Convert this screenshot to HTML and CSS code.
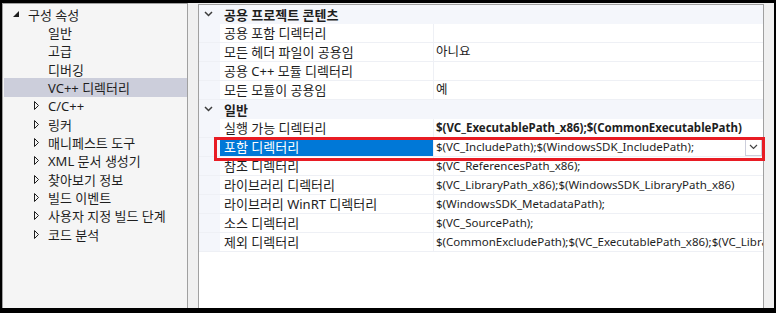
FILE: index.html
```html
<!DOCTYPE html>
<html lang="ko">
<head>
  <meta charset="UTF-8">
  <title>구성 속성 - VC++ 디렉터리</title>
  <link rel="stylesheet" href="styles.css">
</head>
<body>
  <div class="frame">
    <div class="tree">
      <div class="node root">
        <svg class="twisty" width="6" height="6" viewBox="0 0 6 6"><polygon points="6,0 6,6 0,6" fill="#1e1e1e"/></svg>
        <span>구성 속성</span>
      </div>
      <div class="node leaf">일반</div>
      <div class="node leaf">고급</div>
      <div class="node leaf">디버깅</div>
      <div class="node leaf selected">VC++ 디렉터리</div>
      <div class="node branch"><svg class="twisty" width="5" height="9" viewBox="0 0 5 9"><polygon points="0.5,0.5 4.5,4.5 0.5,8.5" fill="none" stroke="#1e1e1e"/></svg><span>C/C++</span></div>
      <div class="node branch"><svg class="twisty" width="5" height="9" viewBox="0 0 5 9"><polygon points="0.5,0.5 4.5,4.5 0.5,8.5" fill="none" stroke="#1e1e1e"/></svg><span>링커</span></div>
      <div class="node branch"><svg class="twisty" width="5" height="9" viewBox="0 0 5 9"><polygon points="0.5,0.5 4.5,4.5 0.5,8.5" fill="none" stroke="#1e1e1e"/></svg><span>매니페스트 도구</span></div>
      <div class="node branch"><svg class="twisty" width="5" height="9" viewBox="0 0 5 9"><polygon points="0.5,0.5 4.5,4.5 0.5,8.5" fill="none" stroke="#1e1e1e"/></svg><span>XML 문서 생성기</span></div>
      <div class="node branch"><svg class="twisty" width="5" height="9" viewBox="0 0 5 9"><polygon points="0.5,0.5 4.5,4.5 0.5,8.5" fill="none" stroke="#1e1e1e"/></svg><span>찾아보기 정보</span></div>
      <div class="node branch"><svg class="twisty" width="5" height="9" viewBox="0 0 5 9"><polygon points="0.5,0.5 4.5,4.5 0.5,8.5" fill="none" stroke="#1e1e1e"/></svg><span>빌드 이벤트</span></div>
      <div class="node branch"><svg class="twisty" width="5" height="9" viewBox="0 0 5 9"><polygon points="0.5,0.5 4.5,4.5 0.5,8.5" fill="none" stroke="#1e1e1e"/></svg><span>사용자 지정 빌드 단계</span></div>
      <div class="node branch"><svg class="twisty" width="5" height="9" viewBox="0 0 5 9"><polygon points="0.5,0.5 4.5,4.5 0.5,8.5" fill="none" stroke="#1e1e1e"/></svg><span>코드 분석</span></div>
    </div>

    <div class="grid">
      <div class="category">
        <svg class="chevron" width="9" height="6" viewBox="0 0 9 6"><polyline points="1,1 4.5,4.5 8,1" fill="none" stroke="#3c3c3c" stroke-width="1.5"/></svg>
        <span>공용 프로젝트 콘텐츠</span>
      </div>
      <div class="row"><div class="name">공용 포함 디렉터리</div><div class="value"></div></div>
      <div class="row"><div class="name">모든 헤더 파일이 공용임</div><div class="value ko">아니요</div></div>
      <div class="row"><div class="name">공용 C++ 모듈 디렉터리</div><div class="value"></div></div>
      <div class="row"><div class="name">모든 모듈이 공용임</div><div class="value ko">예</div></div>

      <div class="category">
        <svg class="chevron" width="9" height="6" viewBox="0 0 9 6"><polyline points="1,1 4.5,4.5 8,1" fill="none" stroke="#3c3c3c" stroke-width="1.5"/></svg>
        <span>일반</span>
      </div>
      <div class="row"><div class="name">실행 가능 디렉터리</div><div class="value bold">$(VC_ExecutablePath_x86);$(CommonExecutablePath)</div></div>
      <div class="row active">
        <div class="name">포함 디렉터리</div>
        <div class="value">
          <span class="text">$(VC_IncludePath);$(WindowsSDK_IncludePath);</span>
          <span class="dropdown"><svg width="9" height="6" viewBox="0 0 9 6"><polyline points="1,1 4.5,4.5 8,1" fill="none" stroke="#444" stroke-width="1.2"/></svg></span>
        </div>
      </div>
      <div class="row"><div class="name">참조 디렉터리</div><div class="value">$(VC_ReferencesPath_x86);</div></div>
      <div class="row"><div class="name">라이브러리 디렉터리</div><div class="value">$(VC_LibraryPath_x86);$(WindowsSDK_LibraryPath_x86)</div></div>
      <div class="row"><div class="name">라이브러리 WinRT 디렉터리</div><div class="value">$(WindowsSDK_MetadataPath);</div></div>
      <div class="row"><div class="name">소스 디렉터리</div><div class="value">$(VC_SourcePath);</div></div>
      <div class="row"><div class="name">제외 디렉터리</div><div class="value">$(CommonExcludePath);$(VC_ExecutablePath_x86);$(VC_LibraryPath_x86)</div></div>

      <div class="highlight"></div>
    </div>
  </div>
</body>
</html>
```

FILE: styles.css
```css
html, body {
  margin: 0;
  height: 313px;
  overflow: hidden;
}
body {
  background: #000;
  font-family: "Noto Sans", "Noto Sans CJK KR", sans-serif;
  font-size: 13px;
  color: #1e1e1e;
}
.frame {
  margin: 3px 2px 0 2px;
  height: 305px;
  background: #f0f0f0;
  display: flex;
}

/* left tree */
.tree {
  width: 186px;
  box-sizing: border-box;
  background: #f5f5f5;
  border: 1px solid #a0a0a0;
  border-bottom: none;
  padding-top: 1px;
  margin-right: 10px;
}
.node {
  height: 18.33px;
  display: flex;
  align-items: center;
  white-space: nowrap;
}
.node.root {
  padding-left: 10px;
}
.node.root .twisty {
  margin-right: 9px;
}
.node.leaf {
  padding-left: 45px;
}
.node.branch {
  padding-left: 31px;
}
.node.branch .twisty {
  margin-right: 9px;
}
.node.selected {
  background: #cccedb;
  margin-left: 1px;
  padding-left: 44px;
}

/* right property grid */
.grid {
  position: relative;
  width: 566px;
  box-sizing: border-box;
  margin-top: 1px;
  background: #fff;
  border: 1px solid #a0a0a0;
  border-bottom: none;
}
.category {
  height: 18px;
  border-bottom: 1px solid #f4f6fb;
  background: #f4f6fb;
  display: flex;
  align-items: center;
  padding-left: 5px;
  font-weight: bold;
}
.category .chevron {
  margin-right: 11px;
}
.row {
  height: 18px;
  display: flex;
  background: #f4f6fb;
  padding-left: 21px;
  border-bottom: 1px solid #eef0f5;
}
.name {
  width: 214px;
  flex: none;
  box-sizing: border-box;
  padding-left: 4px;
  background: #fff;
  border-right: 1px solid #eef0f5;
  line-height: 18px;
  white-space: nowrap;
}
.value {
  flex: 1;
  min-width: 0;
  padding-left: 2px;
  background: #fff;
  line-height: 18px;
  font-size: 11.5px;
  white-space: nowrap;
  overflow: hidden;
  display: flex;
  align-items: center;
}
.value.ko {
  font-size: 12.5px;
}
.value.bold {
  font-weight: bold;
}
.row.active .name {
  background: #0078d7;
  color: #fff;
}
.value .text {
  flex: 1;
}
.dropdown {
  width: 15px;
  height: 15px;
  margin-right: 1px;
  border: 1px solid #cccedb;
  background: #fff;
  display: flex;
  align-items: center;
  justify-content: center;
}
.highlight {
  position: absolute;
  left: 15px;
  top: 132px;
  width: 545px;
  height: 18px;
  border: 3px solid #e81c24;
}
```
